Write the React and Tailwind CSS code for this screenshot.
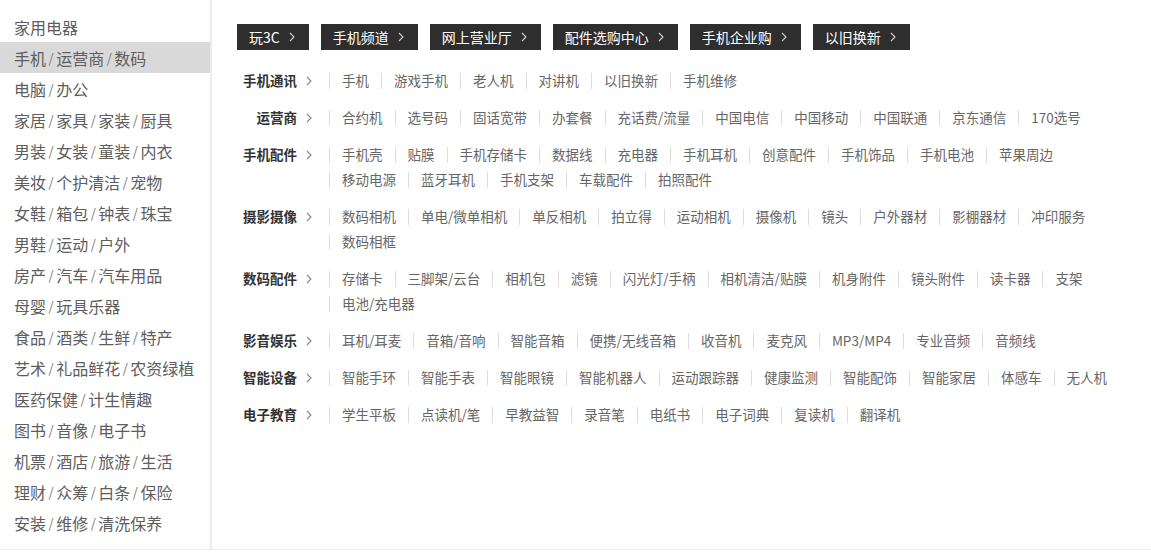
import React from 'react';

const sideMenu = [
  ['家用电器'],
  ['手机', '运营商', '数码'],
  ['电脑', '办公'],
  ['家居', '家具', '家装', '厨具'],
  ['男装', '女装', '童装', '内衣'],
  ['美妆', '个护清洁', '宠物'],
  ['女鞋', '箱包', '钟表', '珠宝'],
  ['男鞋', '运动', '户外'],
  ['房产', '汽车', '汽车用品'],
  ['母婴', '玩具乐器'],
  ['食品', '酒类', '生鲜', '特产'],
  ['艺术', '礼品鲜花', '农资绿植'],
  ['医药保健', '计生情趣'],
  ['图书', '音像', '电子书'],
  ['机票', '酒店', '旅游', '生活'],
  ['理财', '众筹', '白条', '保险'],
  ['安装', '维修', '清洗保养'],
];

const channels = ['玩3C', '手机频道', '网上营业厅', '配件选购中心', '手机企业购', '以旧换新'];

const groups = [
  { name: '手机通讯', items: ['手机', '游戏手机', '老人机', '对讲机', '以旧换新', '手机维修'] },
  { name: '运营商', items: ['合约机', '选号码', '固话宽带', '办套餐', '充话费/流量', '中国电信', '中国移动', '中国联通', '京东通信', '170选号'] },
  { name: '手机配件', items: ['手机壳', '贴膜', '手机存储卡', '数据线', '充电器', '手机耳机', '创意配件', '手机饰品', '手机电池', '苹果周边', '移动电源', '蓝牙耳机', '手机支架', '车载配件', '拍照配件'] },
  { name: '摄影摄像', items: ['数码相机', '单电/微单相机', '单反相机', '拍立得', '运动相机', '摄像机', '镜头', '户外器材', '影棚器材', '冲印服务', '数码相框'] },
  { name: '数码配件', items: ['存储卡', '三脚架/云台', '相机包', '滤镜', '闪光灯/手柄', '相机清洁/贴膜', '机身附件', '镜头附件', '读卡器', '支架', '电池/充电器'] },
  { name: '影音娱乐', items: ['耳机/耳麦', '音箱/音响', '智能音箱', '便携/无线音箱', '收音机', '麦克风', 'MP3/MP4', '专业音频', '音频线'] },
  { name: '智能设备', items: ['智能手环', '智能手表', '智能眼镜', '智能机器人', '运动跟踪器', '健康监测', '智能配饰', '智能家居', '体感车', '无人机'] },
  { name: '电子教育', items: ['学生平板', '点读机/笔', '早教益智', '录音笔', '电纸书', '电子词典', '复读机', '翻译机'] },
];

const Chevron = ({ className }) => (
  <svg width="6" height="10" viewBox="0 0 6 10" className={className} fill="none">
    <polyline points="1,1 5,5 1,9" stroke="currentColor" strokeWidth="1.1" />
  </svg>
);

const App = () => {
  return (
    <div
      className="flex h-[552px] w-[1151px] bg-white"
      style={{ fontFamily: '"Noto Sans CJK SC", "Noto Sans", sans-serif' }}
    >
      {/* 左侧分类 */}
      <div className="h-[550px] w-[212px] shrink-0 border-r-[2px] border-b border-[#ececec] pt-[11px]">
        {sideMenu.map((parts, i) => (
          <div
            key={i}
            className={`flex h-[31px] items-center pl-[14px] text-[16px] text-[#5e5e5e] ${i === 1 ? 'bg-[#d9d9d9]' : ''}`}
          >
            {parts.map((p, j) => (
              <React.Fragment key={j}>
                {j > 0 && <span className="mx-[2.5px] text-[13px] text-[#777]">/</span>}
                <span>{p}</span>
              </React.Fragment>
            ))}
          </div>
        ))}
      </div>

      {/* 右侧内容 */}
      <div className="h-[550px] flex-1 border-b border-[#ececec] pl-[25px] pt-[24px]">
        <div className="flex gap-[12px]">
          {channels.map((c) => (
            <div
              key={c}
              className="flex h-[26px] items-center gap-[9px] bg-[#2e2e2e] pl-[12px] pr-[14px] text-[14px] text-white"
            >
              <span>{c}</span>
              <Chevron className="text-[#cfcfcf]" />
            </div>
          ))}
        </div>

        <div className="mt-[18px] w-[890px]">
          {groups.map((g) => (
            <div key={g.name} className="mb-[12px] flex">
              <div className="flex h-[25px] w-[92px] shrink-0 items-center justify-end pr-[17px] text-[13.5px] font-bold text-[#333]">
                <span>{g.name}</span>
                <Chevron className="ml-[9px] text-[#888]" />
              </div>
              <div className="flex flex-1 flex-wrap">
                {g.items.map((it) => (
                  <div key={it} className="flex h-[25px] items-center text-[13.5px] text-[#666]">
                    <span className="h-[16px] w-px bg-[#dedede]" />
                    <span className="px-[12px]">{it}</span>
                  </div>
                ))}
              </div>
            </div>
          ))}
        </div>
      </div>
    </div>
  );
};

export default App;
